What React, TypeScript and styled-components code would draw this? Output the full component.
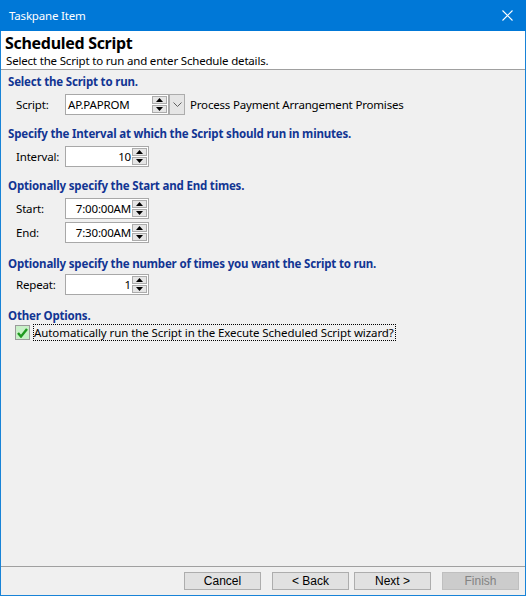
import React from 'react';
import styled, { createGlobalStyle } from 'styled-components';

const Global = createGlobalStyle`
  html, body { margin: 0; padding: 0; background: #f0f0f0; }
  body {
    font-family: "Noto Sans", "Liberation Sans", sans-serif;
    font-size: 11.5px;
    letter-spacing: -0.18px;
    color: #000;
  }
  * { box-sizing: border-box; }
`;

const Window = styled.div`
  width: 526px;
  height: 596px;
  display: flex;
  flex-direction: column;
  background: #f0f0f0;
`;

const TitleBar = styled.div`
  height: 31px;
  flex: none;
  background: #0078d7;
  color: #fff;
  display: flex;
  align-items: center;
  justify-content: space-between;
  padding: 0 13px 0 9px;
`;

const Frame = styled.div`
  flex: 1;
  display: flex;
  flex-direction: column;
  border: 1px solid #1883d7;
  border-top: none;
  min-height: 0;
`;

const Header = styled.div`
  height: 39px;
  flex: none;
  background: #fff;
  border-bottom: 1px solid #a0a0a0;
  padding: 3px 4px 0 4px;
`;

const HeaderTitle = styled.div`
  font-size: 16px;
  font-weight: 700;
  line-height: 19px;
  letter-spacing: -0.3px;
`;

const HeaderSub = styled.div`
  line-height: 15px;
  padding-left: 1px;
`;

const Body = styled.div`
  flex: 1;
  padding: 4px 7px 0 7px;
  display: flex;
  flex-direction: column;
`;

const Section = styled.div<{ $mt?: number }>`
  margin-top: ${p => p.$mt ?? 11}px;
  display: flex;
  flex-direction: column;
`;

const Heading = styled.div<{ $mb?: number }>`
  color: #123593;
  font-weight: 700;
  line-height: 16px;
  margin-bottom: ${p => p.$mb ?? 4}px;
`;

const Row = styled.div<{ $gap?: number }>`
  display: flex;
  align-items: center;
  height: 21px;
  margin-top: ${p => p.$gap ?? 0}px;
  padding-left: 8px;
`;

const Label = styled.div`
  width: 49px;
  flex: none;
`;

const Field = styled.div<{ $width: number }>`
  width: ${p => p.$width}px;
  height: 21px;
  border: 1px solid #a8a8a8;
  background: #fff;
  display: flex;
  align-items: stretch;
  padding: 1px;
`;

const FieldText = styled.div<{ $right?: boolean }>`
  flex: 1;
  display: flex;
  align-items: center;
  justify-content: ${p => (p.$right ? 'flex-end' : 'flex-start')};
  padding: 0 1px 0 1px;
  white-space: nowrap;
`;

const Spin = styled.div`
  width: 15px;
  display: flex;
  flex-direction: column;
  gap: 1px;
`;

const SpinButton = styled.div`
  flex: 1;
  background: #e5e5e5;
  border: 1px solid #acacac;
  display: flex;
  align-items: center;
  justify-content: center;
`;

const DropButton = styled.div`
  width: 16px;
  height: 21px;
  background: #e5e5e5;
  border: 1px solid #acacac;
  display: flex;
  align-items: center;
  justify-content: center;
`;

const Desc = styled.div`
  margin-left: 5px;
  white-space: nowrap;
`;

const CheckRow = styled.div`
  display: flex;
  align-items: center;
  height: 17px;
  padding-left: 7px;
`;

const CheckBox = styled.div`
  width: 15px;
  height: 15px;
  border: 1px solid #9a9a9a;
  background: #c8f0c8;
  display: flex;
  align-items: center;
  justify-content: center;
  flex: none;
`;

const CheckLabel = styled.div`
  margin-left: 3px;
  height: 17px;
  padding: 0 2px 0 1px;
  outline: 1px dotted #000;
  outline-offset: -1px;
  display: flex;
  align-items: center;
  white-space: nowrap;
  letter-spacing: -0.08px;
`;

const Footer = styled.div`
  height: 29px;
  flex: none;
  border-top: 1px solid #a0a0a0;
  display: flex;
  justify-content: flex-end;
  align-items: flex-start;
  padding: 5px 6px 0 0;
`;

const Button = styled.div<{ $disabled?: boolean; $ml: number }>`
  width: 77px;
  height: 18px;
  margin-left: ${p => p.$ml}px;
  background: ${p => (p.$disabled ? '#cccccc' : '#e1e1e1')};
  border: 1px solid ${p => (p.$disabled ? '#bfbfbf' : '#adadad')};
  color: ${p => (p.$disabled ? '#838383' : '#000')};
  font-family: "Liberation Sans", Arial, sans-serif;
  font-size: 12px;
  letter-spacing: 0;
  display: flex;
  align-items: center;
  justify-content: center;
`;

const Up = () => (
  <svg width="7" height="4" viewBox="0 0 7 4"><polygon points="3.5,0 7,4 0,4" fill="#000" /></svg>
);
const Down = () => (
  <svg width="7" height="4" viewBox="0 0 7 4"><polygon points="0,0 7,0 3.5,4" fill="#000" /></svg>
);

const Spinner = () => (
  <Spin>
    <SpinButton><Up /></SpinButton>
    <SpinButton><Down /></SpinButton>
  </Spin>
);

const NumField = ({ width, value }: { width: number; value: string }) => (
  <Field $width={width}>
    <FieldText $right>{value}</FieldText>
    <Spinner />
  </Field>
);

export default function App() {
  return (
    <>
      <Global />
      <Window>
        <TitleBar>
          <span>Taskpane Item</span>
          <svg width="11" height="11" viewBox="0 0 11 11">
            <path d="M0.5 0.5 L10.5 10.5 M10.5 0.5 L0.5 10.5" stroke="#fff" strokeWidth="1.1" />
          </svg>
        </TitleBar>
        <Frame>
          <Header>
            <HeaderTitle>Scheduled Script</HeaderTitle>
            <HeaderSub>Select the Script to run and enter Schedule details.</HeaderSub>
          </Header>
          <Body>
            <Section $mt={0}>
              <Heading>Select the Script to run.</Heading>
              <Row>
                <Label>Script:</Label>
                <Field $width={104}>
                  <FieldText>AP.PAPROM</FieldText>
                  <Spinner />
                </Field>
                <DropButton>
                  <svg width="9" height="5" viewBox="0 0 9 5">
                    <polyline points="0.5,0.5 4.5,4.5 8.5,0.5" fill="none" stroke="#606060" strokeWidth="1" />
                  </svg>
                </DropButton>
                <Desc>Process Payment Arrangement Promises</Desc>
              </Row>
            </Section>
            <Section>
              <Heading>Specify the Interval at which the Script should run in minutes.</Heading>
              <Row>
                <Label>Interval:</Label>
                <NumField width={84} value="10" />
              </Row>
            </Section>
            <Section>
              <Heading>Optionally specify the Start and End times.</Heading>
              <Row>
                <Label>Start:</Label>
                <NumField width={84} value="7:00:00AM" />
              </Row>
              <Row $gap={3}>
                <Label>End:</Label>
                <NumField width={84} value="7:30:00AM" />
              </Row>
            </Section>
            <Section $mt={13}>
              <Heading $mb={2}>Optionally specify the number of times you want the Script to run.</Heading>
              <Row>
                <Label>Repeat:</Label>
                <NumField width={84} value="1" />
              </Row>
            </Section>
            <Section $mt={13}>
              <Heading $mb={0}>Other Options.</Heading>
              <CheckRow>
                <CheckBox>
                  <svg width="11" height="10" viewBox="0 0 11 10">
                    <path d="M1 5 L4 8.5 L10 1" fill="none" stroke="#1f9a1f" strokeWidth="2.4" />
                  </svg>
                </CheckBox>
                <CheckLabel>Automatically run the Script in the Execute Scheduled Script wizard?</CheckLabel>
              </CheckRow>
            </Section>
          </Body>
          <Footer>
            <Button $ml={0}>Cancel</Button>
            <Button $ml={11}>&lt; Back</Button>
            <Button $ml={5}>Next &gt;</Button>
            <Button $ml={11} $disabled>Finish</Button>
          </Footer>
        </Frame>
      </Window>
    </>
  );
}
